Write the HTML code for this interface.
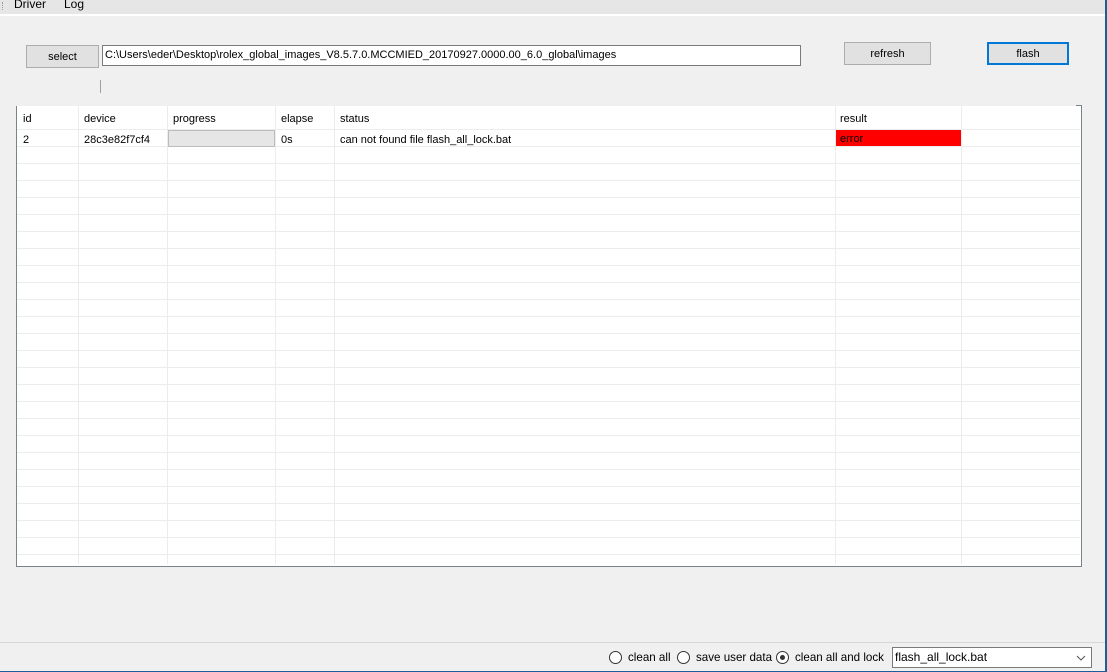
<!DOCTYPE html>
<html><head><style>
*{margin:0;padding:0;box-sizing:border-box}
body{width:1107px;height:672px;overflow:hidden;background:#f0f0f0;font-family:"Liberation Sans",Arial,sans-serif;font-size:11px;color:#000;position:relative}
.a{position:absolute}
.btn{position:absolute;background:#e1e1e1;border:1px solid #adadad;text-align:center;font-size:11px}
.t{position:absolute;font-size:11px;white-space:nowrap}
.vl{position:absolute;top:106px;height:458px;width:1px;background:#ececec}
.radio{position:absolute;width:13px;height:13px;border:1px solid #333;border-radius:50%;background:#fff;top:651px}
.b{font-size:11.6px}
</style></head><body>
<div class="a" style="left:0;top:0;width:1107px;height:14px;background:#e6e6e6"></div>
<div class="a" style="left:0;top:14px;width:1107px;height:2px;background:#fff"></div>
<div class="t" style="left:14px;top:-3px;font-size:12px">Driver</div>
<div class="t" style="left:64px;top:-3px;font-size:12px">Log</div>
<div class="a" style="left:2px;top:2px;width:1px;height:8px;border-left:1px dotted #999"></div>

<div class="btn" style="left:26px;top:45px;width:73px;height:23px;line-height:23px">select</div>
<div class="a" style="left:102px;top:45px;width:699px;height:21px;background:#fff;border:1px solid #7a7a7a;padding:3px 0 0 2px;font-size:11px;white-space:nowrap">C:\Users\eder\Desktop\rolex_global_images_V8.5.7.0.MCCMIED_20170927.0000.00_6.0_global\images</div>
<div class="btn" style="left:844px;top:42px;width:87px;height:23px;line-height:23px">refresh</div>
<div class="btn" style="left:987px;top:42px;width:82px;height:23px;line-height:21px;border:2px solid #0078d7">flash</div>
<div class="a" style="left:100px;top:80px;width:1px;height:13px;background:#a0a0a0"></div>

<div class="a" style="left:16px;top:106px;width:1066px;height:461px;background:#fff;border-left:1px solid #7a828a;border-right:1px solid #7a828a;border-bottom:1px solid #7a828a"></div>
<div class="a" style="left:17px;top:128px;width:1063px;height:438px;background:repeating-linear-gradient(to bottom,transparent 0,transparent 1px,#ececec 1px,#ececec 2px,transparent 2px,transparent 17px)"></div>
<div class="a" style="left:1076px;top:105px;width:6px;height:1px;background:#7a828a"></div>
<div class="a" style="left:17px;top:564px;width:1063px;height:2px;background:#fff"></div>
<div class="vl" style="left:78px"></div>
<div class="vl" style="left:167px"></div>
<div class="vl" style="left:275px"></div>
<div class="vl" style="left:334px"></div>
<div class="vl" style="left:835px"></div>
<div class="vl" style="left:961px"></div>
<div class="t" style="left:23px;top:113px">id</div>
<div class="t" style="left:84px;top:113px">device</div>
<div class="t" style="left:173px;top:113px">progress</div>
<div class="t" style="left:281px;top:113px">elapse</div>
<div class="t" style="left:340px;top:113px">status</div>
<div class="t" style="left:840px;top:113px">result</div>
<div class="t" style="left:23px;top:134px">2</div>
<div class="t" style="left:84px;top:134px">28c3e82f7cf4</div>
<div class="a" style="left:168px;top:130px;width:107px;height:17px;background:#e6e6e6;border:1px solid #bcbcbc"></div>
<div class="t" style="left:281px;top:134px">0s</div>
<div class="t" style="left:340px;top:134px">can not found file flash_all_lock.bat</div>
<div class="a" style="left:836px;top:130px;width:125px;height:16px;background:#f00;padding:4px 0 0 4px;line-height:11px">error</div>

<div class="a" style="left:0;top:642px;width:1107px;height:1px;background:#d7d7d7"></div>
<div class="radio" style="left:609px"></div>
<div class="t b" style="left:628px;top:651px">clean all</div>
<div class="radio" style="left:677px"></div>
<div class="t b" style="left:696px;top:651px">save user data</div>
<div class="radio" style="left:776px"><div class="a" style="left:3px;top:3px;width:5px;height:5px;border-radius:50%;background:#333"></div></div>
<div class="t b" style="left:795px;top:651px">clean all and lock</div>
<div class="a" style="left:892px;top:647px;width:200px;height:21px;background:#fff;border:1px solid #7a7a7a;padding:2px 0 0 2px;font-size:12px">flash_all_lock.bat<svg style="position:absolute;right:5px;top:7px" width="10" height="6"><path d="M1 1 L5 5 L9 1" fill="none" stroke="#555" stroke-width="1"/></svg></div>
<div class="a" style="left:0;top:671px;width:1107px;height:1px;background:#1e5e96"></div>
<div class="a" style="left:1105px;top:0;width:2px;height:672px;background:#1e5e96"></div>
</body></html>
